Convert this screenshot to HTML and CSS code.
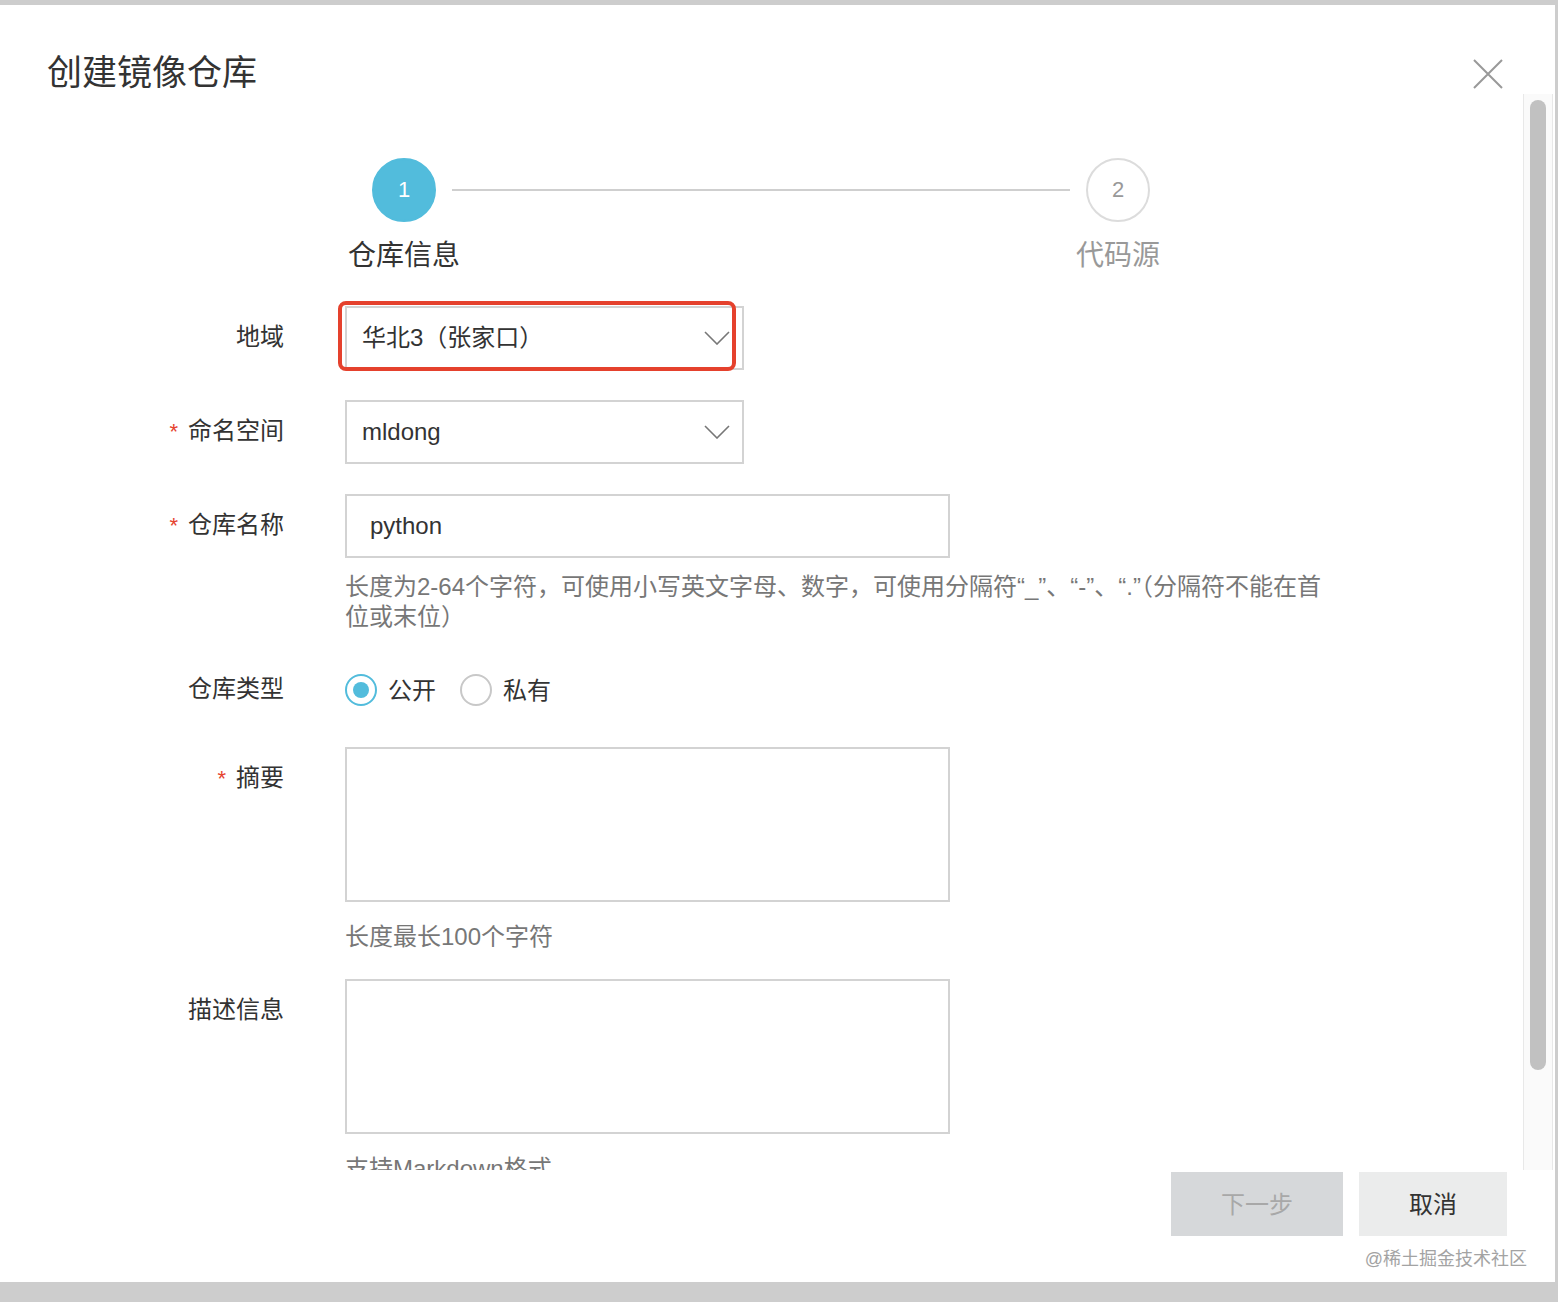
FILE: index.html
```html
<!DOCTYPE html>
<html lang="zh-CN">
<head>
  <meta charset="UTF-8">
  <title>创建镜像仓库</title>
  <link rel="stylesheet" href="styles.css">
</head>
<body>
  <div class="dialog">
    <div class="dialog-header">
      <h1 class="dialog-title">创建镜像仓库</h1>
      <button class="close-btn" aria-label="关闭">
        <svg width="30" height="30" viewBox="0 0 30 30"><path d="M1 1 L29 29 M29 1 L1 29" stroke="#999" stroke-width="2" fill="none"/></svg>
      </button>
    </div>

    <div class="dialog-body">
      <div class="body-content">
        <div class="steps">
          <div class="step active">
            <div class="step-circle">1</div>
            <div class="step-label">仓库信息</div>
          </div>
          <div class="step-line"></div>
          <div class="step">
            <div class="step-circle">2</div>
            <div class="step-label">代码源</div>
          </div>
        </div>

        <div class="form">
          <div class="form-row">
            <label class="form-label">地域</label>
            <div class="field">
              <div class="select select-cjk">
                <span>华北3（张家口）</span>
                <svg class="chevron" width="26" height="14" viewBox="0 0 26 14"><polyline points="1,1 13,13 25,1" stroke="#777" stroke-width="1.6" fill="none"/></svg>
                <div class="highlight"></div>
              </div>
            </div>
          </div>

          <div class="form-row">
            <label class="form-label"><i>*</i>命名空间</label>
            <div class="field">
              <div class="select">
                <span>mldong</span>
                <svg class="chevron" width="26" height="14" viewBox="0 0 26 14"><polyline points="1,1 13,13 25,1" stroke="#777" stroke-width="1.6" fill="none"/></svg>
              </div>
            </div>
          </div>

          <div class="form-row row-name">
            <label class="form-label"><i>*</i>仓库名称</label>
            <div class="field">
              <div class="input">python</div>
              <p class="hint hint-wide">长度为2-64个字符，可使用小写英文字母、数字，可使用分隔符“_”、“-”、“.”（分隔符不能在首位或末位）</p>
            </div>
          </div>

          <div class="form-row row-radio">
            <label class="form-label">仓库类型</label>
            <div class="field radios">
              <span class="radio checked"></span><span class="radio-text">公开</span>
              <span class="radio"></span><span class="radio-text">私有</span>
            </div>
          </div>

          <div class="form-row row-summary">
            <label class="form-label"><i>*</i>摘要</label>
            <div class="field">
              <div class="textarea"></div>
              <p class="hint">长度最长100个字符</p>
            </div>
          </div>

          <div class="form-row row-desc">
            <label class="form-label">描述信息</label>
            <div class="field">
              <div class="textarea"></div>
              <p class="hint">支持Markdown格式</p>
            </div>
          </div>
        </div>
      </div>
      <div class="scrollbar"><div class="scroll-thumb"></div></div>
    </div>

    <div class="dialog-footer">
      <div class="buttons">
        <button class="btn btn-disabled">下一步</button>
        <button class="btn">取消</button>
      </div>
      <div class="watermark">@稀土掘金技术社区</div>
    </div>
  </div>
</body>
</html>
```

FILE: styles.css
```css
* { margin: 0; padding: 0; box-sizing: border-box; }
html, body {
  height: 100%;
  background: #cdcdcd;
  font-family: "Liberation Sans", "Noto Sans CJK SC", sans-serif;
  color: #333;
  overflow: hidden;
}
.dialog {
  margin-top: 5px;
  width: 1555px;
  height: 1277px;
  background: #fff;
  display: flex;
  flex-direction: column;
}
.dialog-header {
  height: 89px;
  padding: 46px 52px 0 47px;
  display: flex;
  justify-content: space-between;
  align-items: flex-start;
}
.dialog-title {
  font-size: 35px;
  font-weight: normal;
  line-height: 44px;
  color: #333;
}
.close-btn {
  border: none;
  background: none;
  width: 30px;
  height: 30px;
  margin-top: 8px;
  cursor: pointer;
}
.close-btn svg { display: block; }

.dialog-body {
  height: 1076px;
  display: flex;
}
.body-content {
  flex: 1;
  overflow: hidden;
}
.scrollbar {
  width: 30px;
  margin-right: 2px;
  background: #fafafa;
  border-left: 1px solid #e8e8e8;
  border-right: 1px solid #e8e8e8;
  padding-top: 6px;
}
.scroll-thumb {
  width: 16px;
  height: 970px;
  margin: 0 auto;
  background: #c1c1c1;
  border-radius: 8px;
}

/* steps */
.steps {
  display: flex;
  align-items: flex-start;
  margin: 64px 0 0 372px;
  width: 778px;
}
.step {
  width: 64px;
  display: flex;
  flex-direction: column;
  align-items: center;
}
.step-circle {
  width: 64px;
  height: 64px;
  border-radius: 50%;
  border: 2px solid #dcdcdc;
  color: #999;
  font-size: 22px;
  display: flex;
  align-items: center;
  justify-content: center;
}
.step.active .step-circle {
  background: #52bcdc;
  border-color: #52bcdc;
  color: #fff;
}
.step-label {
  margin-top: 16px;
  font-size: 28px;
  line-height: 36px;
  white-space: nowrap;
  color: #999;
}
.step.active .step-label { color: #333; }
.step-line {
  flex: 1;
  height: 2px;
  background: #cfcfcf;
  margin: 31px 16px 0;
}

/* form */
.form { margin-top: 32px; }
.form-row {
  display: flex;
  align-items: flex-start;
  margin-bottom: 30px;
}
.form-label {
  width: 284px;
  margin-right: 61px;
  text-align: right;
  font-size: 24px;
  line-height: 62px;
  color: #333;
}
.form-label i {
  font-style: normal;
  color: #e5432f;
  font-size: 22px;
  margin-right: 10px;
}
.field { position: relative; }
.select {
  position: relative;
  width: 399px;
  height: 64px;
  border: 2px solid #d3d3d3;
  padding: 0 12px 0 15px;
  display: flex;
  align-items: center;
  justify-content: space-between;
  font-size: 24px;
}
.select-cjk span { margin-bottom: 5px; }
.chevron { display: block; }
.highlight {
  position: absolute;
  left: -9px;
  top: -7px;
  width: 398px;
  height: 70px;
  border: 4px solid #e5412d;
  border-radius: 8px;
}
.input {
  width: 605px;
  height: 64px;
  border: 2px solid #d3d3d3;
  padding-left: 23px;
  display: flex;
  align-items: center;
  font-size: 24px;
}
.hint {
  margin-top: 14px;
  font-size: 24px;
  line-height: 30px;
  color: #777;
}
.hint-wide { width: 985px; }

.row-name { margin-bottom: 26px; }
.row-radio { margin-bottom: 25px; }
.radios {
  display: flex;
  align-items: center;
  height: 64px;
}
.radio {
  width: 32px;
  height: 32px;
  border-radius: 50%;
  border: 2px solid #c8c8c8;
  display: flex;
  align-items: center;
  justify-content: center;
}
.radio.checked { border-color: #52bcdc; }
.radio.checked::after {
  content: "";
  width: 16px;
  height: 16px;
  border-radius: 50%;
  background: #52bcdc;
}
.radio-text {
  font-size: 24px;
  margin: 0 24px 4px 11px;
}
.textarea {
  width: 605px;
  height: 155px;
  border: 2px solid #d3d3d3;
}
.row-summary .hint, .row-desc .hint { margin-top: 20px; }
.row-summary { margin-bottom: 27px; }

/* footer */
.dialog-footer {
  flex: 1;
  padding: 2px 48px 0 0;
  display: flex;
  flex-direction: column;
  align-items: flex-end;
}
.buttons {
  display: flex;
  gap: 16px;
}
.btn {
  height: 64px;
  width: 148px;
  border: none;
  background: #ebecec;
  color: #333;
  font-family: inherit;
  font-size: 24px;
  padding-bottom: 3px;
}
.btn-disabled {
  width: 172px;
  background: #d6d8da;
  color: #a8a8a8;
}
.watermark {
  margin: 12px -20px 0 0;
  font-size: 18px;
  line-height: 22px;
  color: #a3a3a3;
}
```
